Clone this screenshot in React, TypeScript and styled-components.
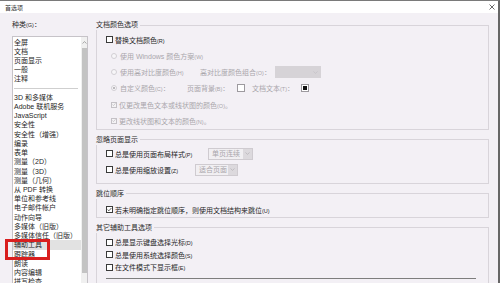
import * as React from 'react';
import styled, {createGlobalStyle} from 'styled-components';

const GlobalStyle = createGlobalStyle`
	html, body {
		margin: 0;
		padding: 0;
		background: #f3f0f5;
	}
	body {
		font-family: "Liberation Sans", "Noto Sans CJK SC", sans-serif;
		color: #2b2b2b;
	}
`;

const Window = styled.div`
	width: 500px;
	height: 283px;
	box-sizing: border-box;
	border-top: 1px solid #7a7a7a;
	border-right: 2px solid #666;
	background: #f3f0f5;
	display: flex;
	flex-direction: column;
	overflow: hidden;
`;

const TitleBar = styled.div`
	height: 12px;
	flex: none;
	background: #fff;
	display: flex;
	align-items: center;
	justify-content: space-between;
	padding: 0 3px 0 5px;
	font-size: 6px;
	color: #333;
`;

const Body = styled.div`
	flex: 1;
	min-height: 0;
	display: flex;
	gap: 8px;
	padding: 7px 9px 0 12px;
`;

const Side = styled.div`
	width: 76px;
	flex: none;
	display: flex;
	flex-direction: column;
`;

const SideLabel = styled.div`
	font-size: 7px;
	line-height: 10px;
	margin-bottom: 6px;
`;

const ListBox = styled.div`
	height: 270px;
	flex: none;
	display: flex;
	background: #fff;
	border: 1px solid #c6c3c8;
`;

const Items = styled.div`
	flex: 1;
	padding-top: 0.5px;
`;

const Item = styled.div<{$selected?: boolean; $marked?: boolean}>`
	position: relative;
	height: 9.23px;
	line-height: 9.23px;
	font-size: 7px;
	padding-left: 1px;
	white-space: nowrap;
	color: #262626;
	background: ${p => (p.$selected ? '#e2e2e2' : 'transparent')};

	&::after {
		content: '';
		display: ${p => (p.$marked ? 'block' : 'none')};
		position: absolute;
		left: -8px;
		top: -1.5px;
		width: 45px;
		height: 21px;
		box-sizing: border-box;
		border: 3px solid #d91f1f;
		z-index: 2;
	}
`;

const Separator = styled.div`
	height: 9.23px;
	display: flex;
	align-items: center;
	padding: 0 3px 0 1px;

	&::before {
		content: '';
		flex: 1;
		border-top: 1px solid #cfcfcf;
	}
`;

const ScrollBar = styled.div`
	width: 6px;
	flex: none;
	background: #f0f0f0;
	display: flex;
	flex-direction: column;
	align-items: center;
`;

const ScrollArrow = styled.div`
	height: 10px;
	display: flex;
	align-items: center;
	justify-content: center;
`;

const Thumb = styled.div`
	width: 5px;
	height: 225px;
	margin-top: 1px;
	background: #c3c3c3;
`;

const Main = styled.div`
	flex: 1;
	min-width: 0;
	display: flex;
	flex-direction: column;
	gap: 5px;
`;

const Group = styled.fieldset`
	margin: 0;
	padding: 0;
	min-width: 0;
	border: 1px solid #d8d4da;
`;

const Legend = styled.legend`
	padding: 0 2px 0 0;
	margin-left: -1px;
	font-size: 7px;
	line-height: 10px;
	color: #2b2b2b;
`;

const Content = styled.div<{$top: number; $bottom?: number}>`
	padding: ${p => p.$top}px 0 ${p => p.$bottom || 0}px 9px;
`;

const Row = styled.div<{$h: number; $indent?: number}>`
	height: ${p => p.$h}px;
	display: flex;
	align-items: center;
	padding-left: ${p => p.$indent || 0}px;
	font-size: 7px;
	white-space: nowrap;
`;

const Text = styled.span<{$dim?: boolean; $w?: number}>`
	color: ${p => (p.$dim ? '#a9a6ab' : '#262626')};
	width: ${p => (p.$w ? `${p.$w}px` : 'auto')};
	flex: none;
`;

const Key = styled.span`
	font-size: 5.5px;
`;

const Box = styled.span<{$dim?: boolean; $size: number}>`
	width: ${p => p.$size}px;
	height: ${p => p.$size}px;
	box-sizing: border-box;
	flex: none;
	margin-right: 2px;
	border: 1px solid ${p => (p.$dim ? '#c4c1c6' : '#3a3a3a')};
	background: ${p => (p.$dim ? '#f4f3f5' : '#fff')};
	display: flex;
	align-items: center;
	justify-content: center;
`;

const Radio = styled.span<{$on?: boolean}>`
	width: 6px;
	height: 6px;
	box-sizing: border-box;
	flex: none;
	margin-right: 3px;
	border-radius: 50%;
	border: 1px solid #d2cfd4;
	background: #f7f6f8;
	display: flex;
	align-items: center;
	justify-content: center;

	&::after {
		content: '';
		display: ${p => (p.$on ? 'block' : 'none')};
		width: 2px;
		height: 2px;
		border-radius: 50%;
		background: #a8a5aa;
	}
`;

const Swatch = styled.span<{$color: string}>`
	width: 8px;
	height: 8px;
	box-sizing: border-box;
	flex: none;
	border: 1px solid #9d9a9f;
	padding: 1px;
	background: #fff;

	&::after {
		content: '';
		display: block;
		width: 100%;
		height: 100%;
		background: ${p => p.$color};
	}
`;

const Select = styled.span<{$w: number; $flat?: boolean}>`
	width: ${p => p.$w}px;
	height: 12px;
	box-sizing: border-box;
	flex: none;
	display: flex;
	border: 1px solid ${p => (p.$flat ? '#d6d3d7' : '#cfcbd0')};
	background: ${p => (p.$flat ? '#d6d3d7' : '#f1eff2')};
	color: #a9a6ab;
	font-size: 7px;
`;

const SelectText = styled.span`
	flex: 1;
	padding-left: 3px;
	line-height: 10px;
`;

const SelectArrow = styled.span<{$flat?: boolean}>`
	width: 9px;
	display: flex;
	align-items: center;
	justify-content: center;
	background: ${p => (p.$flat ? 'transparent' : '#dcd9dd')};
`;

const Gap = styled.span<{$w: number}>`
	width: ${p => p.$w}px;
	flex: none;
`;

const CutField = styled.div`
	margin: 4.5px 12px 0 0;
	height: 20px;
	border-top: 1px solid #7d7d7d;
`;

const CheckMark = ({dim}: {dim?: boolean}) => (
	<svg width="5" height="5" viewBox="0 0 5 5">
		<path d="M0.6 2.6 L1.9 3.8 L4.4 1" fill="none" stroke={dim ? '#b5b2b7' : '#333'} strokeWidth="0.8" />
	</svg>
);

const Chevron = ({up, color}: {up?: boolean; color: string}) => (
	<svg width="5" height="3" viewBox="0 0 5 3">
		<path d={up ? 'M0.5 2.5 L2.5 0.6 L4.5 2.5' : 'M0.5 0.5 L2.5 2.4 L4.5 0.5'} fill="none" stroke={color} strokeWidth="0.7" />
	</svg>
);

const Check = ({label, k, checked, dim}: {label: string; k: string; checked?: boolean; dim?: boolean}) => (
	<>
		<Box $dim={dim} $size={dim ? 6 : 7}>{checked && <CheckMark dim={dim} />}</Box>
		<Text $dim={dim}>
			{label}
			<Key>({k})</Key>
		</Text>
	</>
);

type Entry = {t: string; sep?: boolean; selected?: boolean};

const categories: Entry[] = [
	{t: '全屏'},
	{t: '文档'},
	{t: '页面显示'},
	{t: '一般'},
	{t: '注释'},
	{t: '', sep: true},
	{t: '3D 和多媒体'},
	{t: 'Adobe 联机服务'},
	{t: 'JavaScript'},
	{t: '安全性'},
	{t: '安全性（增强）'},
	{t: '编录'},
	{t: '表单'},
	{t: '测量（2D）'},
	{t: '测量（3D）'},
	{t: '测量（几何）'},
	{t: '从 PDF 转换'},
	{t: '单位和参考线'},
	{t: '电子邮件帐户'},
	{t: '动作向导'},
	{t: '多媒体（旧版）'},
	{t: '多媒体信任（旧版）'},
	{t: '辅助工具', selected: true},
	{t: '跟踪器'},
	{t: '朗读'},
	{t: '内容编辑'},
	{t: '拼写检查'},
];

const App: React.FC = () => (
	<>
		<GlobalStyle />
		<Window>
			<TitleBar>
				<span>首选项</span>
				<svg width="6" height="6" viewBox="0 0 6 6">
					<path d="M0.5 0.5 L5.5 5.5 M5.5 0.5 L0.5 5.5" stroke="#444" strokeWidth="0.8" />
				</svg>
			</TitleBar>
			<Body>
				<Side>
					<SideLabel>
						种类<Key>(G)</Key>：
					</SideLabel>
					<ListBox>
						<Items>
							{categories.map((c, i) =>
								c.sep ? (
									<Separator key={i} />
								) : (
									<Item key={i} $selected={c.selected} $marked={c.selected}>
										{c.t}
									</Item>
								)
							)}
						</Items>
						<ScrollBar>
							<ScrollArrow>
								<Chevron up color="#8a8a8a" />
							</ScrollArrow>
							<Thumb />
						</ScrollBar>
					</ListBox>
				</Side>
				<Main>
					<Group>
						<Legend>文档颜色选项</Legend>
						<Content $top={1.8}>
							<Row $h={16.2}>
								<Check label="替换文档颜色" k="R" />
							</Row>
							<Row $h={16.2} $indent={5}>
								<Radio />
								<Text $dim>
									使用 Windows 颜色方案<Key>(W)</Key>
								</Text>
							</Row>
							<Row $h={16.2} $indent={5}>
								<Radio />
								<Text $dim $w={80}>
									使用高对比度颜色<Key>(H)</Key>
								</Text>
								<Text $dim $w={75}>
									高对比度颜色组合<Key>(O)</Key>：
								</Text>
								<Select $w={46} $flat>
									<SelectText />
									<SelectArrow $flat>
										<Chevron color="#c2bfc4" />
									</SelectArrow>
								</Select>
							</Row>
							<Row $h={16.2} $indent={5}>
								<Radio $on />
								<Text $dim $w={67}>
									自定义颜色<Key>(C)</Key>：
								</Text>
								<Text $dim $w={50}>
									页面背景<Key>(B)</Key>：
								</Text>
								<Swatch $color="#fff" />
								<Gap $w={7} />
								<Text $dim $w={49}>
									文档文本<Key>(T)</Key>：
								</Text>
								<Swatch $color="#111" />
							</Row>
							<Row $h={16.2} $indent={5}>
								<Check label="仅更改黑色文本或线状图的颜色" k="O" checked dim />
								<Text $dim>。</Text>
							</Row>
							<Row $h={16.2} $indent={5}>
								<Check label="更改线状图和文本的颜色" k="N" checked dim />
								<Text $dim>。</Text>
							</Row>
						</Content>
					</Group>
					<Group>
						<Legend>忽略页面显示</Legend>
						<Content $top={1} $bottom={5}>
							<Row $h={16}>
								<Box $size={7} />
								<Text $w={93}>
									总是使用页面布局样式<Key>(P)</Key>
								</Text>
								<Select $w={45}>
									<SelectText>单页连续</SelectText>
									<SelectArrow>
										<Chevron color="#b3b0b5" />
									</SelectArrow>
								</Select>
							</Row>
							<Row $h={16}>
								<Box $size={7} />
								<Text $w={80}>
									总是使用缩放设置<Key>(Z)</Key>
								</Text>
								<Select $w={43}>
									<SelectText>适合页面</SelectText>
									<SelectArrow>
										<Chevron color="#b3b0b5" />
									</SelectArrow>
								</Select>
							</Row>
						</Content>
					</Group>
					<Group>
						<Legend>跳位顺序</Legend>
						<Content $top={4}>
							<Row $h={14}>
								<Check label="若未明确指定跳位顺序，则使用文档结构来跳位" k="U" checked />
							</Row>
						</Content>
					</Group>
					<Group>
						<Legend>其它辅助工具选项</Legend>
						<Content $top={3}>
							<Row $h={12.5}>
								<Check label="总是显示键盘选择光标" k="D" />
							</Row>
							<Row $h={12.5}>
								<Check label="总是使用系统选择颜色" k="S" />
							</Row>
							<Row $h={12.5}>
								<Check label="在文件模式下显示框" k="E" />
							</Row>
							<CutField />
						</Content>
					</Group>
				</Main>
			</Body>
		</Window>
</>
);

export default App;
